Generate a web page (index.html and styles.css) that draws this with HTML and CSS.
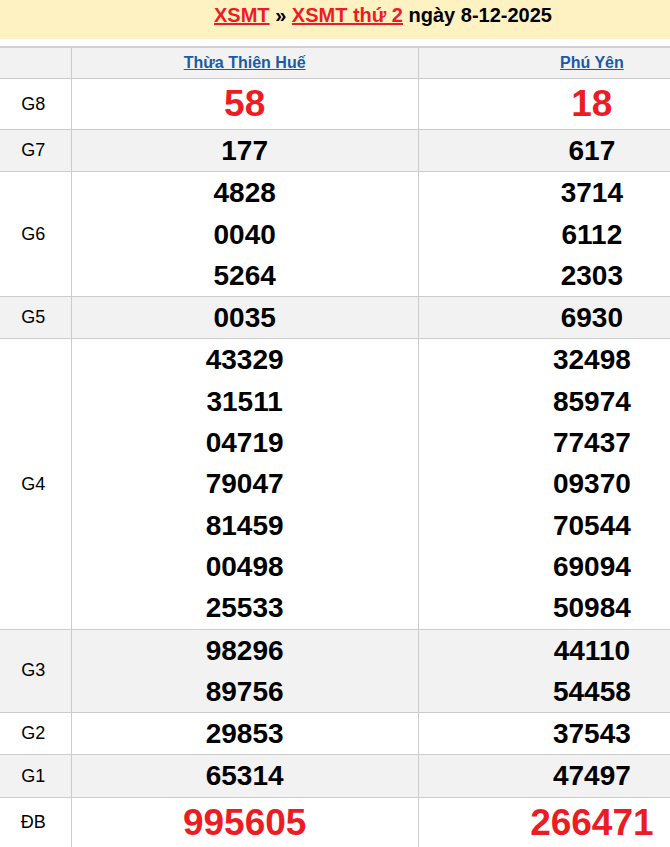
FILE: index.html
```html
<!DOCTYPE html>
<html lang="vi">
<head>
<meta charset="utf-8">
<link rel="stylesheet" href="styles.css">
</head>
<body>
<div class="page">
  <div class="title"><a href="#" class="red">XSMT</a> » <a href="#" class="red">XSMT thứ 2</a> ngày 8-12-2025</div>
  <table class="kq">
    <colgroup><col class="c0"><col class="c1"><col class="c2"></colgroup>
    <tr class="head"><th></th><th><a href="#">Thừa Thiên Huế</a></th><th><a href="#">Phú Yên</a></th></tr>
    <tr class="big"><td class="lbl">G8</td><td><div class="n red">58</div></td><td><div class="n red">18</div></td></tr>
    <tr class="alt"><td class="lbl">G7</td><td><div class="n">177</div></td><td><div class="n">617</div></td></tr>
    <tr><td class="lbl">G6</td><td><div class="n">4828</div><div class="n">0040</div><div class="n">5264</div></td><td><div class="n">3714</div><div class="n">6112</div><div class="n">2303</div></td></tr>
    <tr class="alt"><td class="lbl">G5</td><td><div class="n">0035</div></td><td><div class="n">6930</div></td></tr>
    <tr><td class="lbl">G4</td><td><div class="n">43329</div><div class="n">31511</div><div class="n">04719</div><div class="n">79047</div><div class="n">81459</div><div class="n">00498</div><div class="n">25533</div></td><td><div class="n">32498</div><div class="n">85974</div><div class="n">77437</div><div class="n">09370</div><div class="n">70544</div><div class="n">69094</div><div class="n">50984</div></td></tr>
    <tr class="alt"><td class="lbl">G3</td><td><div class="n">98296</div><div class="n">89756</div></td><td><div class="n">44110</div><div class="n">54458</div></td></tr>
    <tr><td class="lbl">G2</td><td><div class="n">29853</div></td><td><div class="n">37543</div></td></tr>
    <tr class="alt"><td class="lbl">G1</td><td><div class="n">65314</div></td><td><div class="n">47497</div></td></tr>
    <tr class="big"><td class="lbl">ĐB</td><td><div class="n red">995605</div></td><td><div class="n red">266471</div></td></tr>
  </table>
</div>
</body>
</html>
```
FILE: styles.css
```css
html, body { margin: 0; padding: 0; overflow: hidden; background: #fff; }
body { font-family: "Liberation Sans", Arial, sans-serif; color: #000; }
.page { width: 766px; }
.title {
  background: #fff2c2;
  text-align: center;
  font-weight: bold;
  font-size: 20px;
  line-height: 30px;
  padding-bottom: 9px;
  margin-bottom: 7px;
}
.title a { text-decoration: underline; }
.red { color: #ed1c24; }
.kq { border-collapse: collapse; width: 766px; table-layout: fixed; }
.c0 { width: 71px; }
.c1 { width: 347px; }
.c2 { width: 347px; }
.kq td, .kq th { border: 1px solid #cccccc; padding: 0; text-align: center; vertical-align: middle; }
.kq tr:first-child th { border-top: 2px solid #d0d0d0; }
.kq td:first-child, .kq th:first-child { border-left: none; }
.head th { background: #f2f2f2; height: 30px; font-size: 16px; font-weight: bold; }
.head a { color: #1a5aa6; text-decoration: underline; }
.alt td { background: #f2f2f2; }
.kq td.lbl { font-size: 18px; padding-right: 4px; }
.n { font-size: 28px; font-weight: bold; line-height: 41.3px; }
.big .n { font-size: 37px; line-height: 50px; }
```
